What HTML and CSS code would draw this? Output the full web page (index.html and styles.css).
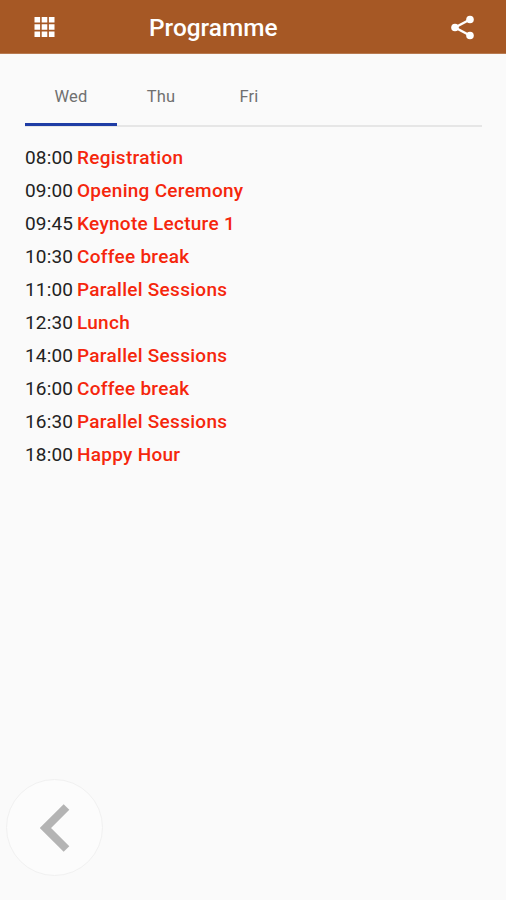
FILE: index.html
```html
<!DOCTYPE html>
<html lang="en">

<head>
  <meta charset="UTF-8">
  <meta name="viewport" content="width=device-width, initial-scale=1.0">
  <title>Programme</title>
  <link rel="stylesheet" href="styles.css">
</head>

<body>
  <header class="header">
    <svg class="icon-menu" viewBox="0 0 20 20">
      <path d="M0 0h5.600v5.600H0zM7.200 0h5.600v5.600H7.200zM14.400 0H20v5.600h-5.600zM0 7.200h5.600v5.600H0zM7.200 7.200h5.600v5.600H7.200zM14.400 7.200H20v5.600h-5.600zM0 14.400h5.600V20H0zM7.200 14.400h5.600V20H7.200zM14.400 14.400H20V20h-5.600z" />
    </svg>
    <h1 class="title">Programme</h1>
    <svg class="icon-share" viewBox="0 0 23 25">
      <path d="M19 4.500L4 12.500l15 8" />
      <circle cx="19" cy="4.500" r="3.800" />
      <circle cx="4" cy="12.500" r="3.800" />
      <circle cx="19" cy="20.500" r="3.800" />
    </svg>
  </header>

  <main class="content">
    <nav class="tabs">
      <a class="tab tab-active">Wed</a>
      <a class="tab">Thu</a>
      <a class="tab">Fri</a>
    </nav>
    <ul class="schedule">
      <li><span class="time">08:00</span><a class="event">Registration</a></li>
      <li><span class="time">09:00</span><a class="event">Opening Ceremony</a></li>
      <li><span class="time">09:45</span><a class="event">Keynote Lecture 1</a></li>
      <li><span class="time">10:30</span><a class="event">Coffee break</a></li>
      <li><span class="time">11:00</span><a class="event">Parallel Sessions</a></li>
      <li><span class="time">12:30</span><a class="event">Lunch</a></li>
      <li><span class="time">14:00</span><a class="event">Parallel Sessions</a></li>
      <li><span class="time">16:00</span><a class="event">Coffee break</a></li>
      <li><span class="time">16:30</span><a class="event">Parallel Sessions</a></li>
      <li><span class="time">18:00</span><a class="event">Happy Hour</a></li>
    </ul>
  </main>

  <footer class="footer">
    <a class="btn-back">
      <svg class="icon-back" viewBox="0 0 30 48">
        <path d="M26.500 3L5.500 24l21 21" />
      </svg>
    </a>
  </footer>
</body>

</html>
```
FILE: styles.css
```css
* {
  margin: 0;
  padding: 0;
  box-sizing: border-box;
}

body {
  display: flex;
  flex-direction: column;
  height: 100vh;
  background-color: #fafafa;
  font-family: Roboto, sans-serif;
}

.header {
  display: flex;
  align-items: center;
  height: 54px;
  padding: 0 32px 0 34px;
  background-color: #a65825;
  border-bottom: 1px solid #b87a50;
  color: #fff;
}

.icon-menu {
  width: 21px;
  height: 20px;
  fill: #fff;
}

.title {
  margin-left: 94px;
  padding-top: 2px;
  font-size: 24.4px;
  font-weight: 500;
}

.icon-share {
  width: 23px;
  height: 25px;
  margin-top: 2px;
  margin-left: auto;
  fill: #fff;
}

.icon-share path {
  fill: none;
  stroke: #fff;
  stroke-width: 2.4;
}

.content {
  flex: 1;
  padding: 12px 24px 0 25px;
}

.tabs {
  display: flex;
  height: 61px;
  padding-bottom: 1px;
  border-bottom: 2px solid #e6e6e6;
  margin-bottom: 14px;
}

.tab {
  min-width: 88px;
  height: 60px;
  line-height: 61px;
  font-size: 16.5px;
  letter-spacing: .2px;
  text-align: center;
  color: #707070;
}

.tab-active {
  width: 92px;
  border-bottom: 3px solid #1f3da5;
}

.schedule {
  list-style: none;
  font-size: 19px;
  line-height: 33px;
}

.schedule li {
  display: flex;
}

.time {
  width: 52px;
  letter-spacing: .15px;
  color: #222;
}

.event {
  color: #f5260c;
  font-weight: 500;
  letter-spacing: .28px;
}

.footer {
  padding: 0 6px 24px;
}

.btn-back {
  display: flex;
  align-items: center;
  justify-content: center;
  width: 97px;
  height: 97px;
  border: 1px solid #f1f1f1;
  border-radius: 50%;
  background-color: #fcfcfc;
}

.icon-back {
  width: 30px;
  height: 48px;
  fill: none;
  stroke: #b4b4b4;
  stroke-width: 8;
}
```
